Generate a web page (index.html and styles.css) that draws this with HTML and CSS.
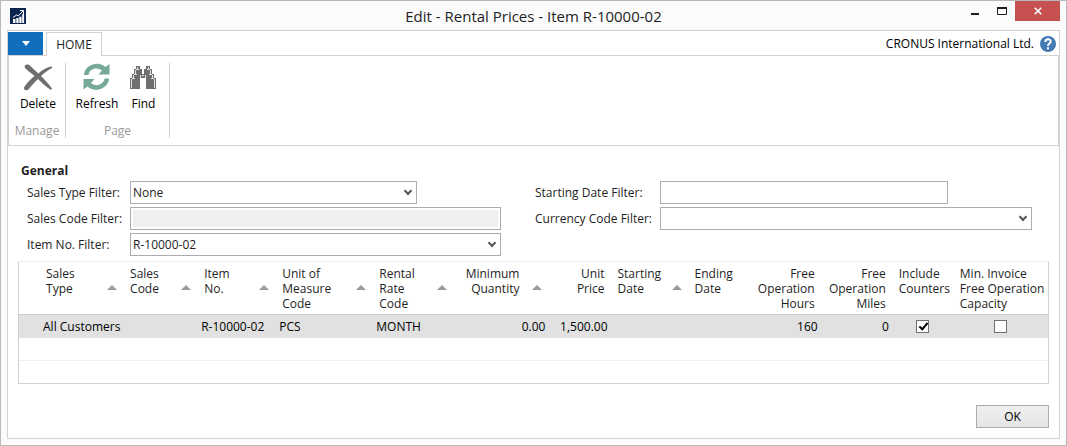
FILE: index.html
```html
<!DOCTYPE html>
<html lang="en">
<head>
<meta charset="utf-8">
<title>Edit - Rental Prices - Item R-10000-02</title>
<link rel="stylesheet" href="styles.css">
</head>
<body>
<div class="window">
  <header class="titlebar">
    <svg class="app-icon" width="16" height="16" viewBox="0 0 16 16" aria-hidden="true">
      <rect width="16" height="16" fill="#0a2450"/>
      <path d="M3 15V11h2.500v4zM6.300 15v-5h2.300v5zM9.300 15V8.800h2.300V15zM12.200 15V6h1.900v9z" fill="#fff"/>
      <path d="M3 9.500L6.500 7l2 .8L13 3M10 2.500h3.500V6" fill="none" stroke="#fff"/>
    </svg>
    <h1 class="title">Edit - Rental Prices - Item R-10000-02</h1>
    <div class="window-buttons">
      <button class="win-btn minimize" aria-label="Minimize"><svg width="10" height="10"><path d="M1 8h8" stroke="#1e1e1e" stroke-width="2"/></svg></button>
      <button class="win-btn maximize" aria-label="Maximize"><svg width="10" height="10"><path d="M0 2h10" stroke="#1e1e1e" stroke-width="2"/><path d="M.5 1v7.500h9V1" fill="none" stroke="#1e1e1e"/></svg></button>
      <button class="win-btn close" aria-label="Close"><svg width="8" height="8"><path d="M.7.700l6.600 6.600M7.300.700L.7 7.300" stroke="#fff" stroke-width="1.600"/></svg></button>
    </div>
  </header>

  <main class="page">
    <nav class="tabs">
      <button class="app-menu" aria-label="Application menu"><svg width="8" height="5"><path d="M0 0h8L4 5z" fill="#fff"/></svg></button>
      <button class="tab">HOME</button>
      <span class="company">CRONUS International Ltd.</span>
      <button class="help" aria-label="Help">
        <svg width="16" height="16" viewBox="0 0 16 16"><circle cx="8" cy="8" r="8" fill="#447bb5"/><path d="M5.300 6C5.300 2.300 10.700 2.300 10.700 5.600 10.700 7.600 8 7.600 8 10" fill="none" stroke="#fff" stroke-width="2"/><path d="M7 11.300h2v2H7z" fill="#fff"/></svg>
      </button>
    </nav>

    <section class="ribbon" aria-label="Home">
      <div class="group manage">
        <div class="actions">
          <button class="action">
            <svg width="32" height="28" viewBox="0 -1 32 28" aria-hidden="true"><path d="M3 1.500C4 0 6.500 0 8.500 2 11 4.500 14 7.500 16.500 9.500 20 6 25 3 30 2.500L30 4C26 6 22 9 19 12 22.500 15.500 27 20 30 24.500L29 26C24 23 19.500 18.500 16 15 12 19 9 22 6.500 25.500 5 27 1.500 26.500 2 23.500 5 18.500 9 15 12.500 12 9 9 5.500 6.500 3.500 4.500 2.500 3.500 2.500 2.500 3 1.500z" fill="#6f6f6f"/></svg>
            <span>Delete</span>
          </button>
        </div>
        <div class="group-name">Manage</div>
      </div>
      <div class="group pages">
        <div class="actions">
          <button class="action">
            <svg width="28" height="28" viewBox="0 0 28 28" aria-hidden="true"><g fill="#76a998"><path d="M1 12C1 3 14-3.500 22.500 4L26.500 1V11.500H15.500L19 7.500C14 3.500 6.500 5.500 5.500 12z"/><path d="M1 12C1 3 14-3.500 22.500 4L26.500 1V11.500H15.500L19 7.500C14 3.500 6.500 5.500 5.500 12z" transform="rotate(180 13.500 13.800)"/></g></svg>
            <span>Refresh</span>
          </button>
          <button class="action">
            <svg width="28" height="28" viewBox="0 0 28 28" aria-hidden="true">
              <path d="M7 3h4v3h2v5h2V6h2V3h4v3h2v5h2v4h2v11H17V15h-2v0h-2v0h-2v11H1V15h2v-4h2V6h2z" fill="#6f6f6f"/>
              <path d="M8.500 4v2M6.500 7v4M4.500 12v3M2.500 16v9M19.500 4v2M21.500 7v4M23.500 12v3M25.500 16v9M7 6.500h3M18 6.500h3M5 11.500h3M20 11.500h3M3 15.500h3M22 15.500h3M11.500 12v3M16.500 12v3M13 12.500h2" stroke="#fff" stroke-opacity=".8" fill="none"/>
            </svg>
            <span>Find</span>
          </button>
        </div>
        <div class="group-name">Page</div>
      </div>
    </section>

    <section class="general">
      <h2 class="heading">General</h2>
      <form class="filters">
        <div class="column">
          <label class="label" for="sales-type">Sales Type Filter:</label>
          <div class="picker short"><select id="sales-type" class="field"><option>None</option></select></div>
          <label class="label" for="sales-code">Sales Code Filter:</label>
          <input id="sales-code" class="field disabled" type="text" disabled>
          <label class="label" for="item-no">Item No. Filter:</label>
          <div class="picker"><select id="item-no" class="field"><option>R-10000-02</option></select></div>
        </div>
        <div class="column second">
          <label class="label" for="start-date">Starting Date Filter:</label>
          <div class="short"><input id="start-date" class="field" type="text"></div>
          <label class="label" for="currency">Currency Code Filter:</label>
          <div class="picker"><select id="currency" class="field"><option></option></select></div>
        </div>
      </form>
    </section>

    <table class="prices">
      <colgroup>
        <col class="w-mark"><col class="w-type"><col class="w-code"><col class="w-item"><col class="w-unit"><col class="w-rate"><col class="w-min"><col class="w-price"><col class="w-start"><col class="w-end"><col class="w-hours"><col class="w-miles"><col class="w-incl"><col class="w-cap">
      </colgroup>
      <thead>
        <tr>
          <td></td>
          <th><div class="head">Sales<br>Type<i class="sort"></i></div></th>
          <th><div class="head">Sales<br>Code<i class="sort"></i></div></th>
          <th><div class="head">Item<br>No.<i class="sort"></i></div></th>
          <th><div class="head">Unit of<br>Measure<br>Code<i class="sort"></i></div></th>
          <th><div class="head">Rental<br>Rate<br>Code<i class="sort"></i></div></th>
          <th class="num"><div class="head sorted">Minimum<br>Quantity<i class="sort"></i></div></th>
          <th class="num"><div class="head">Unit<br>Price</div></th>
          <th><div class="head">Starting<br>Date<i class="sort"></i></div></th>
          <th><div class="head">Ending<br>Date</div></th>
          <th class="num"><div class="head">Free<br>Operation<br>Hours</div></th>
          <th class="num"><div class="head">Free<br>Operation<br>Miles</div></th>
          <th><div class="head">Include<br>Counters</div></th>
          <th><div class="head">Min. Invoice<br>Free Operation<br>Capacity</div></th>
        </tr>
      </thead>
      <tbody>
        <tr class="selected">
          <td></td><td>All Customers</td><td></td><td>R-10000-02</td><td>PCS</td><td>MONTH</td>
          <td class="num">0.00</td><td class="num">1,500.00</td><td></td><td></td><td class="num">160</td><td class="num">0</td>
          <td class="tick"><input class="box" type="checkbox" aria-label="Include Counters" checked></td>
          <td class="tick"><input class="box" type="checkbox" aria-label="Min. Invoice Free Operation Capacity"></td>
        </tr>
        <tr><td colspan="14"></td></tr>
        <tr><td colspan="14"></td></tr>
      </tbody>
    </table>

    <footer class="footer"><button class="ok">OK</button></footer>
  </main>
</div>
</body>
</html>
```
FILE: styles.css
```css
*, ::before, ::after { box-sizing: border-box; }

body {
  margin: 0;
  color: #1e1e1e;
  font: 12px/15px "Open Sans", "Noto Sans", sans-serif;
}

button, input, select { font: inherit; color: inherit; }
button { padding: 0; border: 0; background: none; }
svg { display: block; }

.window {
  display: flex;
  flex-direction: column;
  min-height: 100vh;
  padding: 0 6px 6px;
  border: 1px solid #b9b9b9;
  background: #fbfbfb;
}

/* Title bar */
.titlebar {
  display: grid;
  grid-template-columns: 1fr auto 1fr;
  align-items: center;
  height: 29px;
}
.app-icon { margin-left: 3px; }
.title { margin: 0; font-size: 15px; line-height: 20px; font-weight: 400; }
.window-buttons { display: flex; align-self: start; justify-content: flex-end; }
.win-btn { display: flex; align-items: center; justify-content: center; width: 27px; height: 20px; }
.close { width: 45px; background: #c75050; }

/* Page frame */
.page {
  display: flex;
  flex: 1;
  flex-direction: column;
  border: 1px solid #d2d2d2;
  background: #fff;
}

.tabs {
  display: flex;
  align-items: center;
  height: 25px;
  padding: 1px 3px 0 0;
  border-bottom: 1px solid #d2d2d2;
}
.app-menu {
  display: flex;
  align-items: center;
  justify-content: center;
  align-self: stretch;
  width: 35px;
  background: #106ebe;
}
.tab {
  align-self: stretch;
  width: 56px;
  margin: 0 auto -1px 3px;
  border: 1px solid #d2d2d2;
  border-bottom: 0;
  background: #fff;
}
.company { color: #000; }
.help { margin-left: 6px; }

/* Ribbon */
.ribbon {
  display: flex;
  height: 90px;
  padding: 7px 0;
  border: 1px solid #d2d2d2;
  border-top: 0;
}
.group {
  display: flex;
  flex-direction: column;
  justify-content: space-between;
  border-right: 1px solid #d2d2d2;
}
.manage { width: 57px; }
.pages { width: 104px; }
.actions { display: flex; justify-content: center; gap: 11px; padding-right: 2px; }
.manage .actions { padding: 0 0 0 2px; }
.action { display: flex; flex-direction: column; align-items: center; gap: 5px; color: #000; }
.group-name { color: #999; text-align: center; }

/* Filters */
.general { padding: 17px 10px 0; }
.heading { margin: 0 3px 3px; font-size: 12px; line-height: 15px; }
.filters {
  display: grid;
  grid-template-columns: 474fr 497fr;
  gap: 34px;
  padding: 0 17px 0 9px;
}
.column {
  display: grid;
  grid-template-columns: 103px 1fr;
  align-content: start;
  align-items: center;
  row-gap: 3px;
}
.second { grid-template-columns: 125px 1fr; }
.label { white-space: nowrap; }
.field {
  display: block;
  width: 100%;
  height: 23px;
  padding: 0 2px;
  border: 1px solid #abadb3;
  border-radius: 0;
  background: #fff;
  appearance: none;
}
.short { margin-right: 84px; }
.disabled { padding: 2px; background: #efefef; box-shadow: inset 0 0 0 2px #fff; }
.picker { position: relative; }
.picker::after {
  content: "";
  position: absolute;
  top: 7px;
  right: 6px;
  width: 6px;
  height: 6px;
  border: solid #555;
  border-width: 0 2px 2px 0;
  transform: rotate(45deg);
  pointer-events: none;
}

/* Price lines */
.prices {
  width: calc(100% - 20px);
  margin: 5px 10px 0;
  border: 1px solid #d2d2d2;
  border-top-color: #efefef;
  border-spacing: 0;
  table-layout: fixed;
}
.w-mark { width: 21px; }
.w-type { width: 84px; }
.w-code { width: 74px; }
.w-item { width: 78px; }
.w-unit { width: 97px; }
.w-rate { width: 81px; }
.w-min { width: 95px; }
.w-price { width: 62px; }
.w-start { width: 77px; }
.w-end { width: 67px; }
.w-hours { width: 66px; }
.w-miles { width: 71px; }
.w-incl { width: 61px; }
.w-cap { width: 94px; }
th { padding: 4px 0 3px; font-weight: 400; text-align: left; vertical-align: top; white-space: nowrap; }
.head { position: relative; padding: 0 6px; }
.num { text-align: right; }
.num .head { padding: 0 7px 0 0; }
.num .sorted { padding-right: 30px; }
.sort {
  position: absolute;
  top: 19px;
  right: 7px;
  border: solid transparent;
  border-width: 0 5px 5px;
  border-bottom-color: #9a9a9a;
}
tbody td { height: 23px; padding: 0 4px 0 3px; border-bottom: 1px solid #efefef; color: #000; white-space: nowrap; }
tbody tr:last-child td { height: 22px; border-bottom: 0; }
tbody .selected td { height: 24px; border-top: 1px solid #cbcbcb; border-bottom: 0; background: #e1e1e1; }
.tick { text-align: center; }
.box {
  display: block;
  width: 13px;
  height: 13px;
  margin: 0 auto;
  border: 1px solid #707070;
  background: #fff;
  appearance: none;
}
.box:checked::before {
  content: "";
  display: block;
  width: 5px;
  height: 9px;
  margin: 0 0 0 4px;
  border: solid #000;
  border-width: 0 2px 2px 0;
  transform: rotate(40deg);
}

.footer { display: flex; justify-content: flex-end; margin-top: auto; padding: 21px 10px 10px; }
.ok {
  width: 73px;
  height: 23px;
  border: 1px solid #acacac;
  background: linear-gradient(#f0f0f0, #e5e5e5);
  color: #000;
}
```
